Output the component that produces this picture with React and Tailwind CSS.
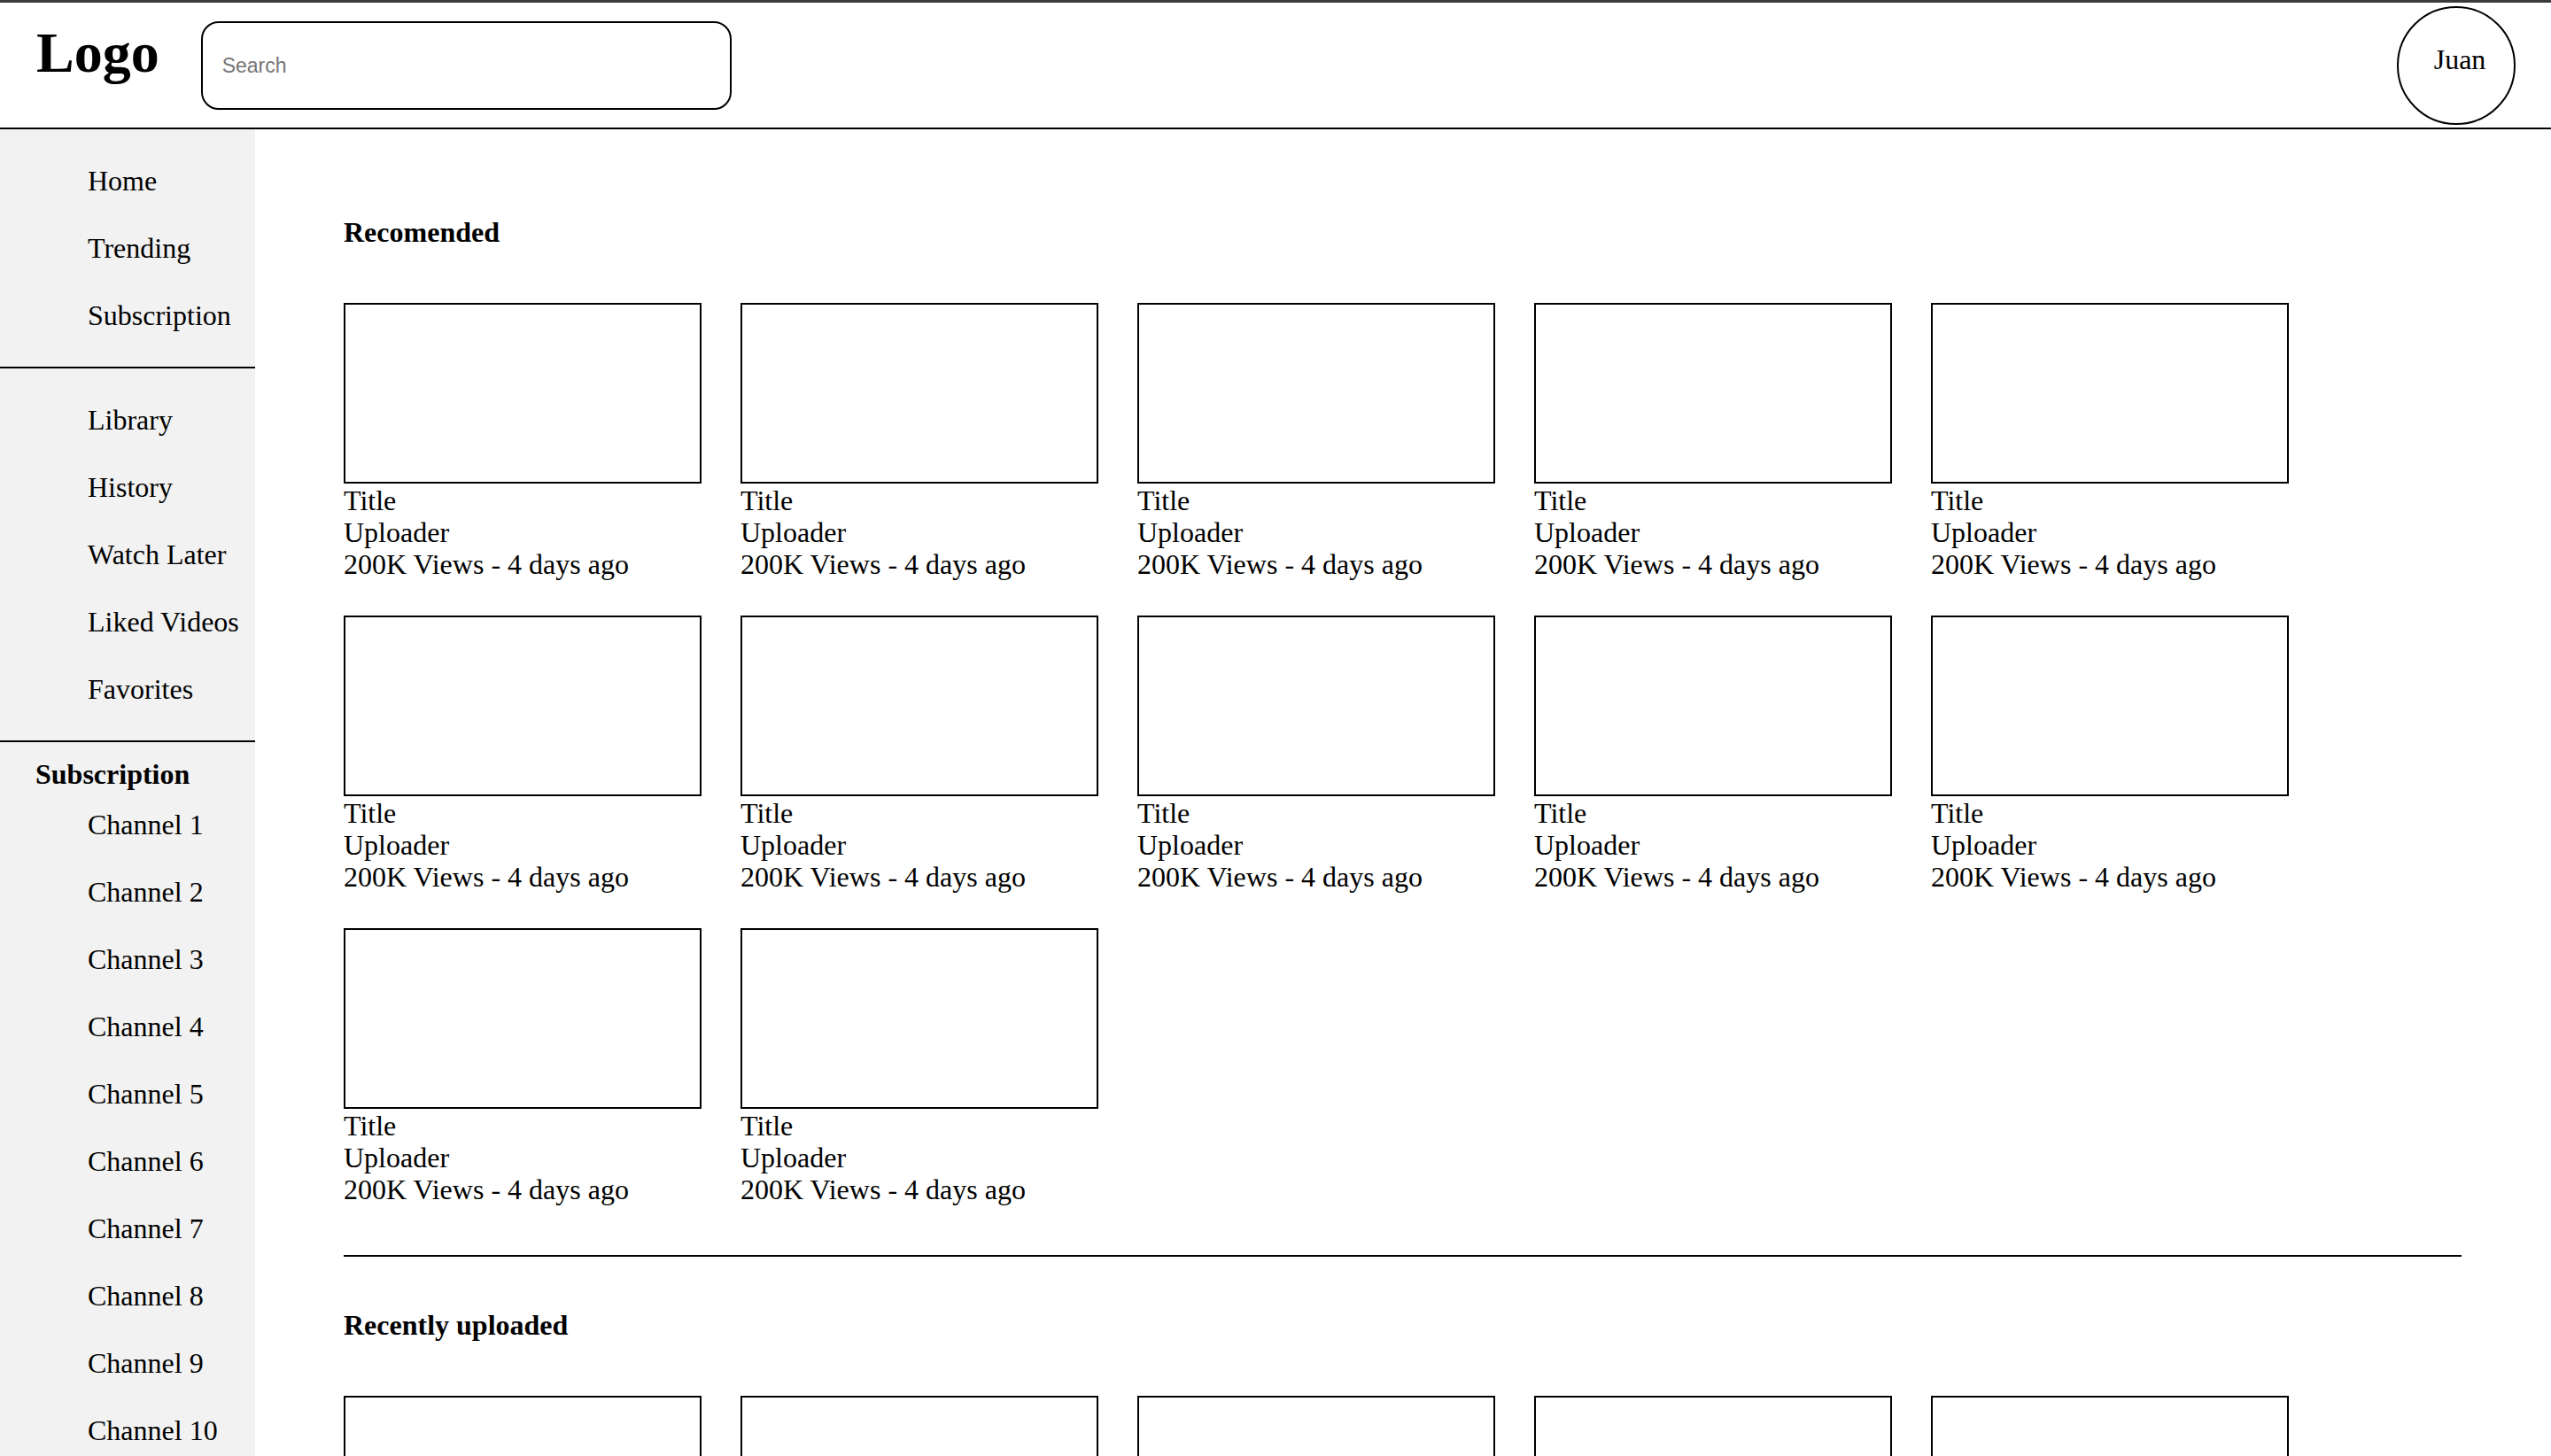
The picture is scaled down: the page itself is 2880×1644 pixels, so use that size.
import React from "react";

const mainNav = ["Home", "Trending", "Subscription"];
const libNav = ["Library", "History", "Watch Later", "Liked Videos", "Favorites"];
const channels = Array.from({ length: 10 }, (_, i) => `Channel ${i + 1}`);

function SideItem({ label }) {
  return (
    <li className="h-[76px] flex items-center pl-[99px] text-[32px] leading-[37px]">
      {label}
    </li>
  );
}

function Card() {
  return (
    <div className="w-[404px] flex flex-col">
      <div className="h-[204px] w-[404px] border-2 border-black bg-white" />
      <div className="pt-[1px] text-[32px] leading-[36px]">
        <div>Title</div>
        <div>Uploader</div>
        <div className="whitespace-nowrap">200K Views - 4 days ago</div>
      </div>
    </div>
  );
}

function Section({ title, count, first }) {
  return (
    <section>
      <h3 className={`${first ? "" : "mt-[59px]"} text-[32px] leading-[37px] h-[37px] font-bold`}>
        {title}
      </h3>
      <div className="mt-[61px] flex flex-wrap gap-x-[44px] gap-y-[40px]">
        {Array.from({ length: count }, (_, i) => (
          <Card key={i} />
        ))}
      </div>
    </section>
  );
}

export default function App() {
  return (
    <div
      className="h-screen w-full overflow-hidden flex flex-col bg-white text-black"
      style={{ fontFamily: '"Liberation Serif", "Times New Roman", serif' }}
    >
      <div className="h-[3px] bg-[#3a3a3a] shrink-0" />
      <header className="h-[143px] shrink-0 flex items-start border-b-2 border-black">
        <h1 className="ml-[41px] mt-[20px] text-[64px] leading-[74px] font-bold">Logo</h1>
        <input
          type="text"
          placeholder="Search"
          className="ml-[47px] mt-[21px] w-[599px] h-[100px] border-2 border-black rounded-[20px] pl-[22px] text-[23px] outline-none placeholder:text-[#767676]"
          style={{ fontFamily: '"Liberation Sans", Arial, sans-serif' }}
        />
        <div className="ml-auto mr-[40px] mt-[4px] w-[134px] h-[134px] rounded-full border-2 border-black flex justify-center items-start pt-[40px] pl-[8px]">
          <span className="text-[32px] leading-[37px]">Juan</span>
        </div>
      </header>
      <div className="flex flex-1 min-h-0">
        <aside className="w-[288px] shrink-0 bg-[#f2f2f2] overflow-hidden">
          <ul className="py-[20px]">
            {mainNav.map((l) => (
              <SideItem key={l} label={l} />
            ))}
          </ul>
          <div className="h-[2px] bg-black" />
          <ul className="py-[20px]">
            {libNav.map((l) => (
              <SideItem key={l} label={l} />
            ))}
          </ul>
          <div className="h-[2px] bg-black" />
          <div className="pt-[18px]">
            <h4 className="pl-[40px] text-[32px] leading-[37px] font-bold">Subscription</h4>
            <ul>
              {channels.map((l) => (
                <SideItem key={l} label={l} />
              ))}
            </ul>
          </div>
        </aside>
        <main className="flex-1 min-w-0 pl-[100px] pr-[101px] pt-[98px] overflow-hidden">
          <Section title="Recomended" count={12} first />
          <div className="mt-[56px] h-[2px] bg-black" />
          <Section title="Recently uploaded" count={10} />
        </main>
      </div>
    </div>
  );
}
